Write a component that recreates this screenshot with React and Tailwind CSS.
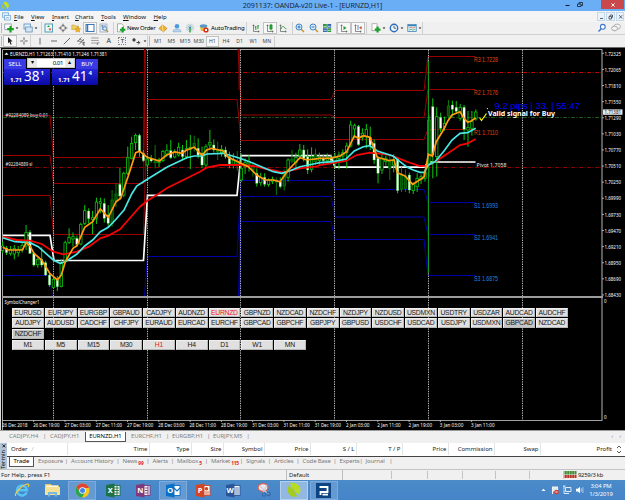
import React from 'react';
import clsx from 'clsx';

/* ---------- chart data ---------- */

const STEP = 3.911;
const candleX = (i) => 2.6 + i * STEP;

// high, open/close top, open/close bottom, low, kind (u = up, d = down, k = dark)
const MORNING = [
    [455, 468, 482, 490, 'u'], [468, 474, 488, 495, 'd'], [468, 478, 490, 497, 'u'], [465, 475, 492, 508, 'u'],
    [468, 478, 488, 500, 'u'], [458, 466, 480, 488, 'u'], [405, 427, 468, 480, 'u'], [420, 427, 490, 492, 'd'],
    [485, 490, 525, 530, 'd'], [503, 508, 524, 533, 'u'], [472, 508, 525, 532, 'd'], [512, 518, 555, 558, 'd'],
    [550, 555, 585, 591, 'd'], [560, 568, 592, 597, 'u'], [558, 570, 590, 603, 'd'], [508, 520, 590, 592, 'u'],
    [452, 458, 512, 517, 'u'], [415, 442, 458, 462, 'u'], [427, 440, 447, 470, 'u'], [437, 445, 463, 470, 'd'],
    [398, 403, 462, 466, 'u'], [345, 362, 400, 405, 'u'], [355, 363, 386, 400, 'd'], [363, 383, 388, 432, 'u'],
    [323, 336, 384, 402, 'u'], [323, 335, 340, 370, 'u'], [325, 340, 385, 398, 'd'], [345, 375, 400, 412, 'd'],
    [300, 330, 400, 410, 'k'], [280, 312, 333, 352, 'k'], [233, 283, 318, 330, 'd'], [245, 250, 315, 322, 'u'],
    [170, 203, 250, 255, 'u'], [140, 160, 205, 208, 'u'], [131, 136, 158, 180, 'u'], [131, 136, 184, 200, 'd'],
    [180, 190, 212, 216, 'd'], [200, 207, 225, 240, 'u'], [195, 207, 213, 218, 'd'], [165, 213, 218, 235, 'k'],
    [203, 210, 218, 232, 'u'], [180, 184, 212, 216, 'u'], [163, 182, 192, 200, 'u'], [150, 182, 203, 207, 'd'],
    [178, 185, 201, 205, 'u'], [158, 172, 195, 200, 'u'], [165, 180, 200, 210, 'd'], [150, 176, 200, 207, 'u'],
    [135, 172, 178, 237, 'u'], [137, 160, 172, 185, 'k'], [145, 175, 195, 205, 'd'], [170, 190, 225, 235, 'd'],
    [163, 170, 225, 235, 'u'], [120, 157, 165, 175, 'u'], [148, 165, 180, 188, 'd'], [155, 178, 185, 210, 'k'],
    [165, 178, 188, 200, 'u'], [170, 180, 200, 206, 'd'], [185, 200, 225, 235, 'd'], [190, 210, 225, 235, 'u'],
    [183, 215, 222, 242, 'k'], [190, 235, 270, 276, 'u'], [205, 218, 230, 252, 'u'], [195, 215, 222, 245, 'u'],
    [220, 230, 240, 260, 'k'], [235, 250, 280, 290, 'd'], [248, 262, 278, 287, 'u'], [250, 262, 283, 290, 'd'],
    [265, 270, 284, 290, 'u'], [260, 268, 274, 282, 'u'], [262, 270, 276, 315, 'k'], [262, 275, 290, 295, 'd'],
    [238, 250, 288, 302, 'k'], [205, 210, 262, 275, 'u'], [180, 208, 214, 220, 'k'], [188, 202, 218, 237, 'u'],
    [162, 180, 196, 208, 'u'], [165, 180, 205, 215, 'd'], [178, 200, 240, 252, 'd'], [172, 200, 238, 247, 'u'],
    [176, 195, 215, 224, 'k'], [188, 202, 212, 225, 'u'], [193, 204, 212, 222, 'd'], [190, 202, 212, 218, 'u'],
    [195, 204, 212, 222, 'd'], [188, 200, 220, 236, 'u'],
];

const EVENING = [
    [305, 315, 325, 358, 'u'], [298, 308, 318, 336, 'u'], [278, 288, 308, 356, 'u'], [212, 225, 288, 292, 'u'],
    [221, 227, 237, 265, 'u'], [225, 229, 284, 287, 'd'], [235, 250, 262, 272, 'u'], [222, 238, 260, 295, 'u'],
    [230, 262, 285, 300, 'd'], [268, 280, 330, 342, 'd'], [318, 325, 370, 400, 'd'], [308, 325, 360, 372, 'u'],
    [316, 325, 335, 347, 'u'], [315, 330, 355, 390, 'k'], [313, 330, 345, 367, 'u'], [322, 327, 422, 430, 'd'],
    [352, 375, 418, 426, 'k'], [358, 378, 415, 426, 'k'], [368, 375, 420, 430, 'd'], [398, 404, 422, 432, 'u'],
    [370, 385, 410, 426, 'u'], [373, 380, 388, 402, 'u'], [358, 366, 385, 395, 'u'], [195, 210, 340, 380, 'u'],
    [145, 170, 315, 385, 'd'], [172, 200, 320, 380, 'u'], [188, 202, 235, 246, 'd'], [200, 220, 232, 242, 'u'],
    [150, 168, 198, 206, 'k'], [152, 165, 178, 200, 'd'], [153, 172, 184, 192, 'd'], [162, 172, 205, 212, 'u'],
    [165, 172, 238, 270, 'd'], [183, 232, 240, 290, 'u'], [183, 215, 235, 257, 'u'], [178, 186, 207, 212, 'u'],
];

const candles = [
    ...MORNING.map((c) => ({ base: 90, c })),
    ...EVENING.map((c) => ({ base: 50, c })),
];

const trace = (...parts) =>
    parts
        .flatMap(([ox, oy, pts]) => pts.map(([x, y]) => `${(ox + x / 3).toFixed(1)},${(oy + y / 3).toFixed(1)}`))
        .join(' ');

const FAST = trace(
    [0, 90, [[8, 472], [25, 480], [67, 480], [79, 458], [90, 468], [102, 490], [125, 510], [149, 550], [172, 570], [184, 555], [196, 515], [219, 475], [231, 467], [254, 412], [278, 395], [301, 357], [325, 382], [348, 335], [362, 325], [384, 260], [407, 188], [419, 184], [442, 202], [478, 213], [500, 195], [525, 186], [545, 190], [560, 180], [583, 172], [600, 190], [607, 195]]],
    [140, 90, [[200, 180], [215, 175], [250, 183], [265, 202], [300, 218], [325, 230], [350, 255], [375, 270], [400, 270], [420, 275], [445, 240], [480, 203], [500, 210], [540, 205]]],
    [320, 50, [[30, 325], [60, 318], [80, 305], [103, 258], [115, 265], [130, 257], [150, 262], [172, 322], [208, 332], [222, 330], [232, 368], [255, 378], [278, 403], [290, 395], [302, 388], [313, 380], [325, 313], [337, 318], [349, 275], [370, 240], [384, 212], [396, 195], [420, 185], [432, 205], [443, 217], [455, 212], [467, 203]]]
);

const MID = trace(
    [0, 90, [[8, 443], [45, 455], [90, 458], [115, 470], [160, 510], [180, 520], [196, 515], [231, 492], [254, 468], [278, 450], [301, 425], [325, 412], [348, 388], [372, 360], [395, 312], [410, 288], [442, 268], [500, 232], [560, 203], [583, 198], [607, 198]]],
    [140, 90, [[200, 192], [250, 190], [300, 205], [340, 220], [380, 237], [400, 245], [425, 250], [450, 242], [480, 230], [520, 222]]],
    [320, 50, [[0, 338], [40, 335], [78, 327], [103, 303], [130, 290], [150, 287], [172, 303], [219, 318], [240, 335], [262, 352], [280, 360], [300, 367], [313, 367], [325, 345], [345, 335], [372, 303], [396, 270], [420, 250], [443, 248], [467, 235]]]
);

const SLOW = trace(
    [0, 90, [[8, 440], [50, 450], [90, 452], [125, 462], [160, 485], [190, 493], [231, 485], [266, 470], [301, 445], [325, 437], [360, 418], [395, 378], [420, 350], [442, 332], [470, 315], [500, 295], [550, 270], [600, 245]]],
    [140, 90, [[200, 233], [240, 225], [300, 225], [340, 228], [380, 237], [430, 247], [480, 235], [530, 229]]],
    [320, 50, [[0, 345], [78, 333], [110, 315], [150, 308], [200, 313], [219, 318], [260, 335], [300, 348], [325, 347], [350, 332], [384, 310], [420, 285], [443, 280], [467, 267]]]
);

const RESISTANCE = [
    '3,195.5 50,195.5 53.5,234.5 143.5,234.5 147.5,99.5 237,99.5 241,140.5 331,140.5 335,139.5 424,139.5 428,129.5 475,129.5',
    '3,155.5 50,155.5 53.5,183.5 143.5,183.5 145.5,49',
    '3,115.5 50,115.5 53.5,157.5 143.5,157.5 144.5,49',
    '239,49 241,115 331,115 335,117.5 424,117.5 428,89.5 475,89.5',
    '238,49 241,99.5 331,99.5 335,90.5 424,90.5 428,56.5 475,56.5',
];

const SUPPORT = [
    '3,275.5 50,275.5 52,296',
    '144.5,296 147.5,256.5 237,256.5 241,180.5 331,180.5 335,189.5 424,189.5 428,202.5 475,202.5',
    '238.5,296 241,196.5 331,196.5 335,217 424,217 428,234.5 475,234.5',
    '239.5,296 241,221.5 331,221.5 335,239.5 424,239.5 428,275.5 475,275.5',
];

const PRICES = ['1.72325', '1.72065', '1.71810', '1.71550', '1.71290', '1.71030', '1.70770', '1.70510', '1.70250', '1.69990', '1.69730', '1.69470', '1.69210', '1.68950', '1.68690', '1.68430'];

const TIMES = ['26 Dec 19:00', '27 Dec 03:00', '27 Dec 11:00', '27 Dec 19:00', '28 Dec 03:00', '28 Dec 11:00', '28 Dec 19:00', '31 Dec 03:00', '31 Dec 11:00', '31 Dec 19:00', '2 Jan 03:00', '2 Jan 11:00', '2 Jan 19:00', '3 Jan 03:00', '3 Jan 11:00'];

const PIVOT_LABELS = [
    ['R3 1.7228', 61.5, '#e8400c'], ['R2 1.7176', 94.5, '#e8400c'], ['R1 1.7110', 135, '#e8400c'],
    ['S1 1.6993', 207.5, '#1e84e4'], ['S2 1.6941', 240, '#1e84e4'], ['S3 1.6875', 280.5, '#1e84e4'],
];

const DAYS = [53.5, 147.5, 240.5, 334.5, 428.5, 522.5];

/* ---------- chart ---------- */

const Label = ({ x, y, w, size = 5.6, fill = '#fff', children, ...rest }) => (
    <text x={x} y={y} textLength={w} lengthAdjust="spacingAndGlyphs" fontSize={size} fill={fill} {...rest}>
        {children}
    </text>
);

const Candle = ({ i, base, c }) => {
    const [h, t, b, l, kind] = c;
    const x = candleX(i);
    const y = (v) => base + v / 3;
    const stroke = kind === 'k' ? '#087a08' : '#0cc80c';
    const fill = kind === 'd' ? '#fff' : kind === 'k' ? '#064a06' : '#000';
    return (
        <g>
            <line x1={x} x2={x} y1={y(h)} y2={y(l)} stroke={stroke} strokeWidth="1" />
            <rect x={x - 1.2} y={y(t)} width="2.4" height={y(b) - y(t)} fill={fill} stroke={stroke} strokeWidth={kind === 'd' ? 0.35 : 0.8} />
        </g>
    );
};

const Chart = () => (
    <svg className="absolute inset-0" width="625" height="383" viewBox="0 47 625 383" fontFamily="'Noto Sans', sans-serif">
        <rect y="47" width="625" height="383" fill="#000" />
        <path d="M0 47.5H625" stroke="#6a6e6a" />
        <path d="M0.5 48V430" stroke="#dcdcdc" />
        <path d="M2.5 430V49.5H602" stroke="#a8aca8" fill="none" />
        <path d="M602 49V420" stroke="#989898" strokeWidth="1.2" />
        <path d="M2 420.5H602.5" stroke="#c8c8c8" strokeWidth="0.8" />

        <path d="M3 72.5H602" stroke="#c00000" strokeDasharray="4 1.5 1 1.5" />
        <path d="M3 117.5H602" stroke="#1d5c1d" strokeDasharray="4 1.5 1 1.5" />
        <path d="M3 167.5H602" stroke="#900000" strokeDasharray="4 1.5 1 1.5" />

        {RESISTANCE.map((p) => <polyline key={p} points={p} fill="none" stroke="#9c0000" />)}
        {SUPPORT.map((p) => <polyline key={p} points={p} fill="none" stroke="#0000a8" />)}
        <path d="M239 50V90" stroke="#8c0000" />
        <path d="M240 200V296" stroke="#000098" />

        <polyline points="3,235.3 50,235.3 54,260.5 143.5,260.5 147.5,195.3 237,195.3 241,155.7 331,155.7 335,167.2 424,167.2 428.5,162 475.5,162" fill="none" stroke="#fff" strokeWidth="1.7" />

        {DAYS.map((x) => <path key={x} d={`M${x} 50V420`} stroke="#c4c4c4" strokeDasharray="1.4 1" strokeWidth="0.9" />)}

        {candles.map(({ base, c }, i) => <Candle key={i} i={i} base={base} c={c} />)}
        <path d="M428.4 61V273" stroke="#0b9c1c" strokeWidth="1.1" />

        <polyline points={SLOW} fill="none" stroke="#f40404" strokeWidth="1.8" />
        <polyline points={MID} fill="none" stroke="#48e8e4" strokeWidth="1.7" />
        <polyline points={FAST} fill="none" stroke="#ff9c10" strokeWidth="1.7" />

        <path d="M479.5 117.5L481.5 120.5L486.5 113.5" stroke="#ffff00" strokeWidth="1.2" fill="none" />
        <circle cx="487.4" cy="108.6" r="0.6" fill="#fff" />

        <path d="M6 53.7L8 51.5L10 53.7Z" transform="translate(-1.5 1)" fill="#fff" />
        <Label x={10} y={55.6} w={97}>EURNZD,H1  1.71263 1.71410 1.71246 1.71381</Label>
        <Label x={5.5} y={117.2} w={42.5} fill="#e4e4e4">#92284089 buy 0.01</Label>
        <Label x={5.5} y={166.2} w={27} fill="#e4e4e4">#92284889 sl</Label>

        {PIVOT_LABELS.map(([text, y, fill]) => (
            <Label key={text} x={474} y={y} w={24} size={6.6} fill={fill} fontFamily="'Liberation Sans', sans-serif">{text}</Label>
        ))}
        <Label x={476.5} y={167.2} w={30} size={6} fill="#e8e8e8">Pivot 1.7058</Label>
        <Label x={494.5} y={109} w={85.5} size={9.6} fill="#0000ff" fontFamily="'Liberation Sans', sans-serif">9.2 pips | 33. | 55:47</Label>
        <Label x={488} y={115.9} w={67} size={6.8} fontWeight="700">Valid signal for Buy</Label>

        {PRICES.map((p, i) => (
            <g key={p}>
                <path d={`M602 ${53.3 + i * 16.11}h2`} stroke="#c8c8c8" strokeWidth="0.8" />
                <Label x={604.5} y={55.5 + i * 16.11} w={16.5} size={5.5}>{p}</Label>
            </g>
        ))}
        <rect x="603" y="109.4" width="19.5" height="5.4" fill="#e8e8e8" />
        <Label x={604.5} y={114.1} w={16.5} size={5.5} fill="#111">1.71381</Label>

        <rect x="2" y="296" width="601" height="2" fill="#9c9c9c" />
        <Label x={4.5} y={304.3} w={35}>SymbolChanger1</Label>
        <Label x={604} y={303} w={2.6}>0</Label>
        <Label x={604} y={419} w={2.6}>0</Label>

        <Label x={2} y={427.3} w={25.5} size={5.5}>26 Dec 2018</Label>
        {TIMES.map((t, i) => (
            <g key={t}>
                <path d={`M${33.7 + i * 31.28} 420v2`} stroke="#c8c8c8" strokeWidth="0.8" />
                <Label x={33.2 + i * 31.28} y={427.3} w={t.length > 11 ? 26.3 : 23.5} size={5.5}>{t}</Label>
            </g>
        ))}
    </svg>
);

/* ---------- one click trading ---------- */

const Quote = ({ small, big, sup }) => (
    <div className="flex h-[16px] w-[46px] items-end justify-center bg-linear-to-b from-[#2626d8] to-[#0808a4] pb-[2px] leading-none text-white">
        <span className="mr-[2px] text-[6px] font-bold">{small}</span>
        <span className="text-[13.5px] leading-[13px]">{big}</span>
        <span className="mb-[7px] ml-[1px] text-[6px] font-bold">{sup}</span>
    </div>
);

const OneClick = () => (
    <div className="w-[94px]">
        <div className="flex h-[11px] justify-between">
            <div className="mt-[1px] w-[22px] bg-[#3a3ae4] text-center text-[6px] leading-[10px] text-white">SELL</div>
            <div className="flex h-[10px] w-[48px] items-center border border-[#c8c8c8] bg-white text-[6px] text-black">
                <span className="h-full w-[9px] bg-[#e8e8e8] text-center leading-[7px]">▾</span>
                <span className="flex-1 pr-[2px] text-right leading-[8px] tracking-[-0.4px]">0.01</span>
                <span className="h-full w-[9px] bg-[#e8e8e8] text-center leading-[7px]">▴</span>
            </div>
            <div className="mt-[1px] w-[22px] bg-[#3a3ae4] text-center text-[6px] leading-[10px] text-white">BUY</div>
        </div>
        <div className="flex justify-between">
            <Quote small="1.71" big="38" sup="1" />
            <Quote small="1.71" big="41" sup="4" />
        </div>
    </div>
);

/* ---------- symbol changer ---------- */

const ROWS = [
    'EURUSD EURJPY EURGBP GBPAUD CADJPY AUDNZD EURNZD GBPNZD NZDCAD NZDCHF NZDJPY NZDUSD USDMXN USDTRY USDZAR AUDCAD AUDCHF',
    'AUDJPY AUDUSD CADCHF CHFJPY EURAUD EURCAD EURCHF GBPCAD GBPCHF GBPJPY GBPUSD USDCHF USDCAD USDJPY USDMXN GBPCAD NZDCAD',
    'NZDCHF',
    'M1 M5 M15 M30 H1 H4 D1 W1 MN',
].map((r) => r.split(' '));

const SymbolChanger = () => (
    <div className="flex flex-col gap-[1px]">
        {ROWS.map((row, r) => (
            <div key={r} className="flex gap-[1px]">
                {row.map((name, i) => (
                    <div
                        key={i}
                        className={clsx(
                            'h-[9.8px] w-[31.75px] border border-[#efefef] border-r-[#b8b8b8] border-b-[#b8b8b8] text-center font-["Liberation_Sans",sans-serif] text-[6.8px] leading-[8.4px] tracking-[-0.25px]',
                            (r === 1 && i === 15) || r === 2 ? 'bg-[#c6c6c6]' : 'bg-[#e0e0e0]',
                            name === 'EURNZD' || name === 'H1' ? 'text-[#f01818]' : 'text-[#181818]'
                        )}
                    >
                        {name}
                    </div>
                ))}
            </div>
        ))}
    </div>
);

/* ---------- toolbars ---------- */

const Icon = ({ on, narrow, children }) => (
    <span className={clsx('flex h-[12px] shrink-0 items-center justify-center', narrow ? 'w-[12px]' : 'w-[13.75px]', on && 'border border-[#c2c2c2] bg-[#f8f8f8]')}>
        <svg className="shrink-0" width="10" height="10" viewBox="0 0 10 10" fill="none">{children}</svg>
    </span>
);

const Drop = () => (
    <svg className="shrink-0" width="4" height="10" viewBox="0 0 4 10"><path d="M0.6 4.4h2.8L2 6Z" fill="#111" /></svg>
);

const Handle = () => <span className="mx-[1px] h-[10px] w-[1px] shrink-0 bg-[#b8b8b8]" />;

const Axes = () => <path d="M2.5 1.5V8.5H8.5M1.5 2.5h2M7.5 7.5v2" stroke="#5a625a" strokeWidth="0.7" />;

const MainToolbar = () => (
    <div className="flex h-[13px] items-center border-b border-[#cfcfcf] text-[6px] text-black">
        <div className="flex w-[42px] items-center border-r border-[#d0d0d0]">
            <Handle />
            <Icon narrow><rect x="0.8" y="1" width="6.4" height="5.5" fill="#fff" stroke="#70889c" strokeWidth="0.7" /><path d="M6.5 3v6.5M3.2 6.2h6.6" stroke="#16a020" strokeWidth="2.2" /></Icon>
            <Drop />
            <span className="w-[3px]" />
            <Icon narrow><rect x="1" y="1" width="6.5" height="5" fill="#e4f0fa" stroke="#5890c0" strokeWidth="0.8" /><rect x="2.7" y="4" width="6.5" height="5" fill="#d4e6f6" stroke="#6a90b0" strokeWidth="0.8" /></Icon>
            <Drop />
        </div>
        <div className="flex w-[72px] items-center border-r border-[#d0d0d0]">
            <Icon><rect x="1" y="1" width="7.5" height="8" fill="#eef6fc" stroke="#50a0b8" /><path d="M3 4l1.5-1.7L6 4Z" fill="#18a028" /><path d="M4.5 5.5h3L6 8Z" fill="#e04c20" /></Icon>
            <Icon><circle cx="5" cy="5" r="2.6" stroke="#777" strokeWidth="0.8" /><path d="M5 0.7v3M5 6.3v3M0.7 5h3M6.3 5h3" stroke="#555" strokeWidth="0.9" /></Icon>
            <Icon><path d="M0.8 2h2.6l1 1h3v3.6H0.8Z" fill="#f0d060" stroke="#b89030" strokeWidth="0.5" /><path d="M6.7 3.6l1 1.8 2 .3-1.4 1.4.3 2-1.9-.9-1.8.9.3-2-1.4-1.4 2-.3Z" fill="#f2b620" stroke="#b07818" strokeWidth="0.4" /></Icon>
            <Icon on><rect x="1" y="1.5" width="8" height="7" fill="#fff" stroke="#3a78b8" /><path d="M2.5 2v6" stroke="#3a78b8" strokeWidth="1.5" /></Icon>
            <Icon><rect x="1" y="1" width="7" height="8" fill="#e6eef6" stroke="#90a4b8" strokeWidth="0.7" /><path d="M2 3h5M3.4 2v5" stroke="#5c80a8" strokeWidth="0.7" /><circle cx="5.8" cy="5.6" r="1.9" fill="#cfe4f6" stroke="#4478a8" strokeWidth="0.7" /><path d="M7.2 7l2 2" stroke="#c09030" strokeWidth="1.1" /></Icon>
        </div>
        <div className="flex w-[133px] items-center border-r border-[#d0d0d0] pl-[1px]">
            <Icon narrow><path d="M1.5 0.8h4.2l1.8 2v6H1.5Z" fill="#fff" stroke="#777" strokeWidth="0.6" /><path d="M6.6 4v5.5M3.8 6.7h5.6" stroke="#18a028" strokeWidth="2" /></Icon>
            <span className="w-[29px] whitespace-nowrap tracking-[-0.25px]">New Order</span>
            <Icon><path d="M0.8 5.6L4.5 2l4.6 3.4L5.6 8.8Z" fill="#f0b430" stroke="#a87010" strokeWidth="0.5" /><path d="M4.5 2v4l1 2.8" stroke="#fbe08c" strokeWidth="0.8" /></Icon>
            <Icon><circle cx="5" cy="3.3" r="2.3" fill="#4c9cdc" /><path d="M1 8.8C0.8 6.4 3 6 5 6s4.3.5 4 2.8Z" fill="#bcd6ee" stroke="#6c9cc8" strokeWidth="0.5" /></Icon>
            <Icon><circle cx="5" cy="4.8" r="3.8" stroke="#b4ccd8" strokeWidth="0.7" /><circle cx="5" cy="4.8" r="2.2" stroke="#7ab0a8" strokeWidth="0.7" /><path d="M5 4.5v5" stroke="#28a038" strokeWidth="1.3" /><circle cx="5" cy="4.5" r="1" fill="#2c80b8" /></Icon>
            <Icon><path d="M1 4h7L7 8H2Z" fill="#e8bc38" /><ellipse cx="4.5" cy="3" rx="3.8" ry="1.8" fill="#5898c8" /><circle cx="7" cy="7" r="2.6" fill="#e02818" /><rect x="6" y="6" width="2" height="2" fill="#fff" /></Icon>
            <span className="whitespace-nowrap tracking-[-0.1px]">AutoTrading</span>
        </div>
        <div className="flex w-[46px] items-center border-r border-[#d0d0d0] pl-[2px]">
            <Icon><Axes /><path d="M4.8 3v4M6.9 2v4M4.8 4h-1M6.9 3h1" stroke="#189028" strokeWidth="0.9" /></Icon>
            <Icon on><Axes /><path d="M6 0.8v6.8" stroke="#189028" strokeWidth="0.8" /><rect x="4.9" y="2" width="2.2" height="4" fill="#20b030" stroke="#0c7418" strokeWidth="0.5" /></Icon>
            <Icon><Axes /><path d="M3 6C4 3 5.5 2.6 6.4 4.6L8.4 6" stroke="#189028" strokeWidth="0.8" /></Icon>
        </div>
        <div className="flex w-[44px] items-center border-r border-[#d0d0d0]">
            <Icon><path d="M6 6l3 3" stroke="#c89428" strokeWidth="1.5" /><circle cx="4" cy="4" r="3" fill="#d8ecfa" stroke="#4088c8" /><path d="M2.5 4h3M4 2.5v3" stroke="#2868b0" strokeWidth="0.9" /></Icon>
            <Icon><path d="M6 6l3 3" stroke="#c89428" strokeWidth="1.5" /><circle cx="4" cy="4" r="3" fill="#d8ecfa" stroke="#4088c8" /><path d="M2.5 4h3" stroke="#2868b0" strokeWidth="0.9" /></Icon>
            <Icon><path d="M1 1h3.8v3.8H1Z M5.3 5.3h3.8v3.6H5.3Z" fill="#30983c" /><path d="M5.3 1h3.8v3.8H5.3Z M1 5.3h3.8v3.6H1Z" fill="#3464b8" /><path d="M1.5 3.4h2.8M5.8 3.4h2.8M1.5 7.4h2.8M5.8 7.4h2.8" stroke="#d8ecd8" strokeWidth="0.8" /></Icon>
        </div>
        <div className="flex w-[30px] items-center border-r border-[#d0d0d0]">
            <Icon on><Axes /><path d="M4.5 3l3 2-3 2Z" fill="#20a030" /></Icon>
            <Icon on><Axes /><path d="M5 2v5" stroke="#3878b0" strokeWidth="0.8" /><path d="M8.6 3L6 4.7l2.6 1.7Z" fill="#d84820" /></Icon>
        </div>
        <div className="flex w-[56px] items-center border-r border-[#d0d0d0] pl-[3px]">
            <Icon narrow><rect x="1" y="0.8" width="5" height="7" fill="#fff" stroke="#888" strokeWidth="0.6" /><path d="M6.6 3.6v6M3.7 6.6h5.8" stroke="#18a028" strokeWidth="2.2" /></Icon>
            <Drop />
            <span className="w-[1.5px]" />
            <Icon narrow><circle cx="5" cy="5" r="3.7" fill="#eaf4fc" stroke="#2c6cb8" strokeWidth="1.4" /><path d="M5 2.8V5.2H7" stroke="#234" strokeWidth="0.7" /></Icon>
            <Drop />
            <span className="w-[2px]" />
            <Icon narrow><rect x="0.8" y="1.4" width="8.4" height="7.2" fill="#e8f4fc" stroke="#3c84b8" strokeWidth="0.8" /><path d="M1 2.6h8" stroke="#3c84b8" strokeWidth="1.3" /><path d="M2 5l2-.8 1.6.8 2.6-.8" stroke="#d04020" strokeWidth="0.6" /><path d="M2 7.2l2-1 1.6.8 2.6-.6" stroke="#209038" strokeWidth="0.6" /></Icon>
            <Drop />
        </div>
        <div className="ml-auto flex items-center gap-[2px] pr-[3px]">
            <Icon narrow><path d="M4.2 5.8L1.5 8.6" stroke="#3c74cc" strokeWidth="1.4" /><circle cx="5.8" cy="3.8" r="2.4" fill="#fff" stroke="#3c74cc" strokeWidth="1.1" /></Icon>
            <Icon narrow><ellipse cx="6.2" cy="3.6" rx="3.3" ry="2.5" fill="#f4f4f4" stroke="#a4a4a4" strokeWidth="0.8" /><ellipse cx="3.6" cy="5.4" rx="3" ry="2.2" fill="#f4f4f4" stroke="#9a9a9a" strokeWidth="0.8" /><path d="M3 7.5v1.6l1.8-1.8" fill="#aaa" /></Icon>
        </div>
    </div>
);

const FRAMES = ['M1', 'M5', 'M15', 'M30', 'H1', 'H4', 'D1', 'W1', 'MN'];

const LineToolbar = () => (
    <div className="flex h-[12px] items-center">
        <div className="flex w-[31px] items-center border-r border-[#d0d0d0]">
            <Handle />
            <Icon on><path d="M3 1l4.6 4.4H5.5l1.2 2.8-1.1.5-1.2-2.8L3 7.2Z" fill="#222" /></Icon>
            <Icon><path d="M5 1.3v7.4M1.3 5h7.4" stroke="#444" strokeWidth="0.8" strokeDasharray="2.9 1.5" /></Icon>
        </div>
        <div className="flex w-[117px] items-center border-r border-[#d0d0d0] pl-[2px]">
            <Icon><path d="M5 2v6.5" stroke="#444" strokeWidth="0.8" /></Icon>
            <Icon><path d="M2 5h6" stroke="#444" strokeWidth="0.8" /></Icon>
            <Icon><path d="M1.8 8.2L8 2" stroke="#444" strokeWidth="0.8" /></Icon>
            <Icon><path d="M1.2 6L5.5 1.4M3 8.5L8 3M1.5 4.5l5 2M3 3l5 2" stroke="#555" strokeWidth="0.7" /><path d="M7 6.5h2M7 6.5V9h2M7 7.8h1.5" stroke="#333" strokeWidth="0.6" /></Icon>
            <Icon><path d="M1.5 2h7M1.5 4.5h7M1.5 7h5" stroke="#555" strokeWidth="0.7" strokeDasharray="1.4 0.5" /><path d="M7.3 9V6.8h2" stroke="#333" strokeWidth="0.6" /></Icon>
            <span className="w-[13.75px] text-center text-[7px] text-[#333]">A</span>
            <span className="flex w-[13.75px] justify-center"><span className="h-[8px] w-[8px] border border-dotted border-[#888] text-center text-[6px] leading-[6px] text-[#222]">T</span></span>
            <Icon><path d="M1 4l2-2.2L5 4 3 6Z" fill="#444" /><path d="M5.5 6.5h3M7 5l1.8 1.6L7 8.5" stroke="#333" strokeWidth="0.9" /></Icon>
            <Drop />
        </div>
        <div className="flex w-[127px] items-center border-r border-[#d0d0d0] text-[5.2px] text-[#444]">
            <Handle />
            {FRAMES.map((f) => (
                <span key={f} className={clsx('h-[11px] w-[13.65px] shrink-0 text-center', f === 'H1' ? 'border border-[#c2c2c2] bg-[#f8f8f8] leading-[9px]' : 'leading-[11px]')}>{f}</span>
            ))}
        </div>
    </div>
);

const TitleBar = () => (
    <div className="relative flex h-[11px] items-start justify-center bg-[#6aaef6] text-[7.1px] leading-[11px] text-[#1a2838]">
        <svg className="absolute left-[1px] top-[1px]" width="10" height="9" viewBox="0 0 10 9"><path d="M3 1C5 0 8 2 8 5L6.6 8 2.5 2Z" fill="#c4e020" /><path d="M1 3l3.6 5.4C2 8.6 0 6 1 3Z" fill="#a8cc18" /></svg>
        <span className="whitespace-nowrap tracking-[-0.07px]">2091137: OANDA-v20 Live-1 - [EURNZD,H1]</span>
        <div className="absolute right-[1px] top-0 flex h-[9px] items-center">
            <svg width="37" height="9" viewBox="0 0 37 9" fill="none"><path d="M1.5 5.5h4" stroke="#123" strokeWidth="1.1" /><path d="M13.5 4h3.5v2.5h-3.5ZM15 4V2.5h3.5v3H17" stroke="#123" strokeWidth="0.8" /></svg>
            <div className="flex h-[9px] w-[23px] items-center justify-center bg-[#c9484c]">
                <svg width="4" height="4" viewBox="0 0 4 4"><path d="M.4.4l3.2 3.2M3.6.4L.4 3.6" stroke="#fff" strokeWidth="0.9" /></svg>
            </div>
        </div>
    </div>
);

const MENU = [
    ['File', 'w-[17px]'], ['View', 'w-[21px]'], ['Insert', 'w-[23px]'], ['Charts', 'w-[26px]'],
    ['Tools', 'w-[22px]'], ['Window', 'w-[30.5px]'], ['Help', 'w-[20px]'],
];

const MenuBar = () => (
    <div className="flex h-[11px] items-center bg-[#f4f4f4] text-[6.1px] leading-[10px] text-[#111]">
        <svg className="mr-[3px] ml-[2px]" width="9" height="9" viewBox="0 0 9 9" fill="none"><rect x="0.6" y="0.8" width="6" height="4.5" fill="#e0f0fc" stroke="#78acd8" strokeWidth="0.8" /><rect x="2.5" y="3.5" width="6" height="4.5" fill="#eef6fc" stroke="#78acd8" strokeWidth="0.8" /><path d="M3.5 6.5l1.5-1 2 .5" stroke="#4a90c8" strokeWidth="0.6" /></svg>
        {MENU.map(([m, w]) => (
            <span key={m} className={w}><u>{m[0]}</u>{m.slice(1)}</span>
        ))}
        <div className="ml-auto flex gap-[1px] pr-[1px]">
            {['M2 5.5h3', 'M2 3.5h2.5v2.5H2ZM3.2 3.5V2h2.3v2.5H4.5', 'M2.2 2.2l3 3.3M5.2 2.2l-3 3.3'].map((d) => (
                <span key={d} className="h-[9px] w-[8.5px] border border-[#c4d8e8] bg-[#eaf3fa]">
                    <svg width="7" height="7" viewBox="0 0 7 7" fill="none"><path d={d} stroke="#44546a" strokeWidth="0.9" /></svg>
                </span>
            ))}
        </div>
    </div>
);

/* ---------- bottom panels ---------- */

const Tabs = () => (
    <div className="flex h-[13px] items-start border-t border-[#9a9a9a] bg-[#f0f0f0] pt-[0.5px] text-[5.9px] leading-[9.5px] text-[#808080]">
        <span className="w-[43px] pl-[9px]">CADJPY,H4</span>
        <span className="w-[7px]">|</span>
        <span className="w-[35px]">CADJPY,H1</span>
        <span className="h-[10px] w-[41px] border border-t-0 border-[#555] bg-white text-center text-black">EURNZD,H1</span>
        <span className="w-[40px] pl-[5px] tracking-[-0.05px]">EURCHF,H1</span>
        <span className="w-[6px]">|</span>
        <span className="w-[35px] tracking-[-0.05px]">EURGBP,H1</span>
        <span className="w-[6px]">|</span>
        <span className="w-[33.5px] tracking-[-0.05px]">EURJPY,M5</span>
        <span>|</span>
        <span className="ml-auto flex gap-[6px] pr-[4px] text-[6px]"><span>‹</span><span>›</span></span>
    </div>
);

const COLUMNS = [
    ['Time', 'w-[82px]'], ['Type', 'w-[42px]'], ['Size', 'w-[32px]'], ['Symbol', 'w-[41px]'], ['Price', 'w-[46px]'], ['S / L', 'w-[46px]'],
    ['T / P', 'w-[46px]'], ['Price', 'w-[46px]'], ['Commission', 'w-[46px]'], ['Swap', 'w-[46px]'],
];

const PANES = [
    ['Exposure', 'w-[33px]'], ['Account History', 'w-[51.5px]'], ['News', 'w-[30px]', '99'], ['Alerts', 'w-[24.5px]'],
    ['Mailbox', 'w-[34px]', '5'], ['Market', 'w-[35px]', '115'], ['Signals', 'w-[28px]'], ['Articles', 'w-[28.5px]'],
    ['Code Base', 'w-[37px]'], ['Experts', 'w-[26px]'], ['Journal', 'w-[30px]'],
];

const Terminal = () => (
    <div className="flex h-[25.5px] text-[6px]">
        <div className="flex w-[7px] shrink-0 flex-col items-center justify-between bg-[#b4c4d8] pt-[1px]">
            <svg width="4" height="4" viewBox="0 0 4 4"><path d="M.4.4l3 3M3.4.4l-3 3" stroke="#111" strokeWidth="0.9" /></svg>
            <span className="rotate-180 whitespace-nowrap text-[5.8px] leading-[7px] text-black [writing-mode:vertical-rl]">Termin</span>
        </div>
        <div className="flex-1">
            <div className="flex h-[13.5px] items-center border-b border-[#444] bg-white leading-[12px] text-[#222]">
                <span className="w-[61px] border-r border-[#e4e4e4] pl-[4px]">Order <span className="pl-[3px] text-[5px] text-[#999]">⁄</span></span>
                {COLUMNS.map(([c, w], i) => (
                    <span key={i} className={clsx('shrink-0 whitespace-nowrap border-r border-[#e4e4e4] pr-[1.5px] text-right', w)}>{c}</span>
                ))}
                <span className="flex-1 pr-[3px] text-right">Profit</span>
                <svg className="mr-[2px]" width="8" height="11" viewBox="0 0 8 11" fill="none"><path d="M2 4l2-2 2 2M2 7l2 2 2-2" stroke="#444" strokeWidth="0.9" /></svg>
            </div>
            <div className="flex h-[12px] items-start bg-[#f0f0f0] leading-[9.5px] text-[#7c7c7c]">
                <span className="ml-[2px] mr-[1px] h-[10.5px] w-[25px] shrink-0 border border-t-0 border-[#555] bg-white text-center text-black">Trade</span>
                {PANES.map(([p, w, n]) => (
                    <span key={p} className={clsx('flex shrink-0 justify-between whitespace-nowrap tracking-[-0.15px]', w)}>
                        <span className="pl-[3px]">{p}{n && <span className="relative top-[2px] pl-[1px] text-[4.8px] font-bold text-[#e82020]">{n}</span>}</span>
                        <span>|</span>
                    </span>
                ))}
            </div>
        </div>
    </div>
);

const StatusBar = () => (
    <div className="flex h-[11.5px] items-center border-t border-[#c4c4c4] bg-[#f0f0f0] text-[5.9px] leading-[10px] text-[#222]">
        <span className="w-[286px] pl-[1px]">For Help, press F1</span>
        <span className="w-[57px] border-x border-[#bdbdbd] pl-[2px]">Default</span>
        <span className="h-[8px] w-[49px] border-r border-[#c4c4c4]" />
        <span className="h-[8px] w-[36px] border-r border-[#c4c4c4]" />
        <span className="h-[8px] w-[35px] border-r border-[#c4c4c4]" />
        <span className="h-[8px] w-[33px] border-r border-[#c4c4c4]" />
        <span className="h-[8px] w-[34px] border-r border-[#c4c4c4]" />
        <span className="h-[8px] w-[33.5px] border-r border-[#c4c4c4]" />
        <svg width="13" height="7" viewBox="0 0 13 7"><path d="M0.5 0h12v3.5h-12z" fill="#3c8c38" /><path d="M0.5 4h12v3h-12z" fill="#b83028" /><path d="M3 0v7M5.5 0v7M8 0v7M10.5 0v7" stroke="#e8dcc0" strokeWidth="0.5" /></svg>
        <span className="pl-[1.5px] tracking-[-0.25px]">9259/3 kb</span>
    </div>
);

const Office = ({ color, letter, children }) => (
    <svg width="16" height="15" viewBox="0 0 16 15" fill="none">
        <rect x="6.5" y="2.5" width="8.5" height="10" fill="#fff" stroke={color} strokeWidth="0.9" />
        {children}
        <path d="M1 2L9.5 0.5V14.5L1 13Z" fill={color} />
        <text x="5.2" y="10.3" fontSize="7.5" fontWeight="700" fill="#fff" textAnchor="middle">{letter}</text>
    </svg>
);

const APPS = [
    <svg width="16" height="16" viewBox="0 0 16 16" fill="none"><path d="M12.6 10.5A5 5 0 1 1 13 8.3H4.5" stroke="#58c4f4" strokeWidth="2.5" /><path d="M1.5 14C0.5 11 8 3 14 2c1.2 0 1 1.5.2 3" stroke="#f4cc40" strokeWidth="1.2" /></svg>,
    <svg width="17" height="16" viewBox="0 0 17 16"><path d="M1 2h6l1 1.5h7V8H1Z" fill="#e8c868" /><path d="M2 3.5h12v6H2Z" fill="#fff8e0" /><path d="M1 5h15v8H1Z" fill="#f6e094" /><path d="M4 14.5V10h9v4.5h-2V12H6v2.5Z" fill="#78b8e0" /></svg>,
    <svg width="15" height="15" viewBox="0 0 15 15"><circle cx="7.5" cy="7.5" r="7" fill="#f2c820" /><path d="M1.4 4A7 7 0 0 1 14 5H7.5L5 9Z" fill="#e04434" /><path d="M1.4 4A7 7 0 0 0 7 14.5L10 9 5 9Z" fill="#2ca44c" /><circle cx="7.5" cy="7.5" r="3.2" fill="#fff" /><circle cx="7.5" cy="7.5" r="2.5" fill="#4484f0" /></svg>,
    <Office color="#1e7045" letter="X"><path d="M9 5h5M9 7.5h5M9 10h5M12 3v9" stroke="#1e7045" strokeWidth="0.9" /></Office>,
    <Office color="#80397b" letter="N"><path d="M10 5h3M10 7.5h3M10 10h3M13 3v9" stroke="#80397b" strokeWidth="0.9" /></Office>,
    <Office color="#0a70c6" letter="O"><path d="M9 5l3 3 3-3" stroke="#0a70c6" strokeWidth="1.2" /></Office>,
    <Office color="#d24625" letter="P"><path d="M10 9h4M10 11h4" stroke="#d24625" strokeWidth="0.9" /><circle cx="11.5" cy="5.8" r="1.8" fill="#d24625" /></Office>,
    <Office color="#2a5699" letter="W"><path d="M10 5h4M10 7h4M10 9h4M10 11h4" stroke="#2a5699" strokeWidth="0.8" /></Office>,
    <svg width="16" height="16" viewBox="0 0 16 16" fill="none"><ellipse cx="7" cy="5.5" rx="5" ry="3.8" fill="#f0e8e8" stroke="#d86058" strokeWidth="1.3" /><path d="M4 4l8 8M11 3L7 11" stroke="#c4ccd8" strokeWidth="1.2" /><circle cx="12.5" cy="12" r="1.7" stroke="#3468a8" strokeWidth="1.1" /><circle cx="8" cy="12.5" r="1.7" stroke="#3468a8" strokeWidth="1.1" /></svg>,
    <svg width="17" height="16" viewBox="0 0 17 16"><path d="M5 1C10-0.5 16 3 15.5 9L14 12.5L11 10.5L7.5 5.5V9Z" fill="#b8dc20" /><path d="M4.500 2.5L7 9.5L7.5 5.5L12 14.5C5 16.500 0 9 4.5 2.5Z" fill="#a4cc18" /></svg>,
    <svg width="15" height="15" viewBox="0 0 15 15" fill="none"><rect width="15" height="15" fill="#0c4484" /><path d="M4.5 12V9H11.5V4H3.5M6.5 11.7H12" stroke="#fff" strokeWidth="1.8" /></svg>,
];

const Taskbar = () => (
    <div className="flex h-[20px] items-center bg-linear-to-b from-[#4a8bc8] to-[#4684c8] pl-[7px] text-white">
        {APPS.map((app, i) => (
            <div key={i} className="flex h-[20px] w-[30.2px] shrink-0 items-center justify-center">
                <div
                    className={clsx(
                        'flex h-[19px] w-[28px] items-center justify-center',
                        (i === 2 || i === 5 || i === 10) && 'border border-[#7eabdc] bg-[#6599d2]',
                        i === 9 && 'border border-[#b4d0ee] bg-[#92b8e2]'
                    )}
                >
                    {app}
                </div>
            </div>
        ))}
        <div className="ml-auto flex items-center pr-[10px]">
            <svg width="48" height="12" viewBox="0 0 48 12" fill="none">
                <path d="M2.5 7l2-2.2 2 2.2Z" fill="#fff" />
                <path d="M13.5 2.5v7.5M13.5 3h5v4h-5" stroke="#f0f0f0" strokeWidth="1.1" fill="#dce8f4" />
                <circle cx="17.5" cy="8" r="2.3" fill="#e03428" />
                <path d="M16.6 7.1l1.8 1.8M18.4 7.1l-1.8 1.8" stroke="#fff" strokeWidth="0.6" />
                <path d="M26.5 3.5h5.5v4h-5.5ZM25 2v3.5M24 2h2.5M25 6v3.5h5" stroke="#eef4fa" strokeWidth="0.9" />
                <path d="M37 4.8h1.8L41 2.8v6.5L38.8 7.4H37Z" fill="#fff" />
                <path d="M42.2 4.3v3.6M43.9 3.2v5.8" stroke="#dce8f6" strokeWidth="0.7" />
            </svg>
            <div className="w-[28px] text-center text-[5.9px] leading-[8px] tracking-[-0.15px]">
                <div>3:04 PM</div>
                <div>1/3/2019</div>
            </div>
        </div>
    </div>
);

const App = () => (
    <div className="flex h-[500px] w-[625px] flex-col overflow-hidden bg-[#f0f0f0] font-['Noto_Sans','Open_Sans',sans-serif]">
        <TitleBar />
        <MenuBar />
        <MainToolbar />
        <LineToolbar />
        <div className="relative h-[383px] shrink-0">
            <Chart />
            <div className="relative pt-[11px] pl-[4px]">
                <OneClick />
            </div>
            <div className="relative pt-[222.5px] pl-[12px]">
                <SymbolChanger />
            </div>
        </div>
        <Tabs />
        <Terminal />
        <StatusBar />
        <Taskbar />
    </div>
);

export default App;
